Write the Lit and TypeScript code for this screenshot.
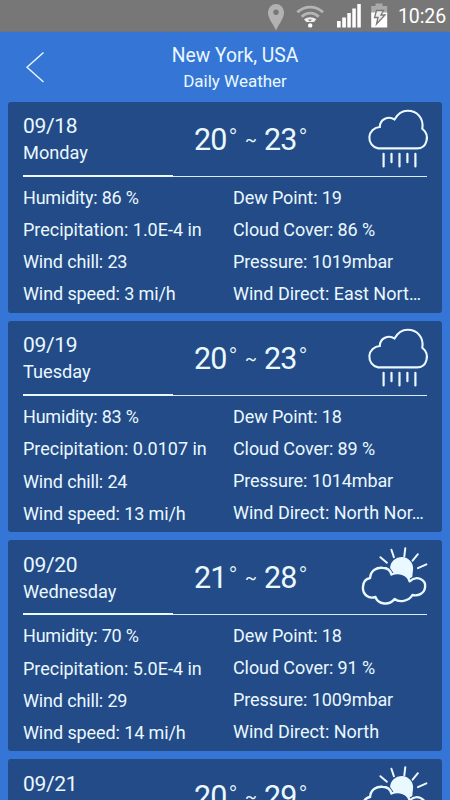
import { LitElement, html, svg, css } from "lit";
import { customElement, property } from "lit/decorators.js";

interface Day {
  date: string;
  name: string;
  low: number;
  high: number;
  icon: "rain" | "sun";
  left: string[];
  right: string[];
}

const days: Day[] = [
  {
    date: "09/18", name: "Monday", low: 20, high: 23, icon: "rain",
    left: ["Humidity: 86 %", "Precipitation: 1.0E-4 in", "Wind chill: 23", "Wind speed: 3 mi/h"],
    right: ["Dew Point: 19", "Cloud Cover: 86 %", "Pressure: 1019mbar", "Wind Direct: East Nort…"],
  },
  {
    date: "09/19", name: "Tuesday", low: 20, high: 23, icon: "rain",
    left: ["Humidity: 83 %", "Precipitation: 0.0107 in", "Wind chill: 24", "Wind speed: 13 mi/h"],
    right: ["Dew Point: 18", "Cloud Cover: 89 %", "Pressure: 1014mbar", "Wind Direct: North Nor…"],
  },
  {
    date: "09/20", name: "Wednesday", low: 21, high: 28, icon: "sun",
    left: ["Humidity: 70 %", "Precipitation: 5.0E-4 in", "Wind chill: 29", "Wind speed: 14 mi/h"],
    right: ["Dew Point: 18", "Cloud Cover: 91 %", "Pressure: 1009mbar", "Wind Direct: North"],
  },
  { date: "09/21", name: "", low: 20, high: 29, icon: "sun", left: [], right: [] },
];

// Letter spacing in px, by the first word of a reading.
const tracking: Record<string, number> = {
  Humidity: -0.2, Precipitation: -0.02, "Wind chill": -0.15, "Wind speed": -0.1,
  "Dew Point": -0.1, "Cloud Cover": -0.1, Pressure: -0.1, "Wind Direct": 0,
};

const reading = (t: string) =>
  html`<div style="letter-spacing:${tracking[t.split(":")[0]] ?? 0}px">${t}</div>`;

const rain = svg`
  <path d="M16.500 45.200 A10.800 10.800 0 0 1 18.200 23.800 C18.200 16 27 12.200 32.900 16.300 C36.500 10 41 7.600 46 7.600 C55.500 7.600 62.500 15 60.700 25.500 C68.800 32 65.500 45.200 55.500 45.200 Z" stroke-width="2.100"/>
  <path d="M22 50.600V63.200M29.900 50.600V59M37.900 50.600V63.200M45.800 50.600V59M53.800 50.600V63.200" stroke-width="2.200" stroke-linecap="round"/>`;

const sun = svg`
  <path d="M40.500 33 A11.500 11.500 0 0 1 63.500 34 L62.700 42 L59 44 C56 38.500 50 36.800 45 39.500 Z" fill="currentColor" stroke="none"/>
  <path d="M20.500 43 C21 35 27.500 32.300 33 32.800 C37.500 32.900 40.800 35.500 41.800 39.500 C48.500 36.500 58 38.500 60 46.300 C67.500 39.500 76.500 45 75.500 52 C74.800 59 68 61.200 62.800 60 C59 66.500 49.500 67.800 45 64 C39.500 71 28.500 69.500 25.800 62 C19 64.300 13.200 59.500 13.300 52.500 C13.400 47.500 16 43.800 20.500 43 Z" fill="#234b87" stroke-width="2.400" stroke-linejoin="round"/>
  <path d="M30.800 22.200L37.300 27.700M41.800 14.800L44.300 22.300M55.700 13.200L54.700 21.300M68.300 19.200L63 25.700M76.800 29.300L68.300 33.100" stroke-width="2" stroke-linecap="round"/>`;

@customElement("status-bar")
class StatusBar extends LitElement {
  static styles = css`
    :host { display: flex; height: 32px; background: #777; color: #fff; justify-content: flex-end; box-shadow: inset 0 -1px #6c747f; }
    svg { width: 137px; height: 32px; flex: none; }
    .clock { width: 53px; font-size: 19.500px; line-height: 33px; padding-left: 1px; box-sizing: border-box; white-space: nowrap; letter-spacing: -0.100px; }
  `;
  render() {
    return html`
      <svg viewBox="260 0 137 32">
        <path d="M276 30.500C274 25 268 19 268 12.500A8 8.500 0 0 1 284 12.500C284 19 278 25 276 30.500Z" fill="#b2b2b2"/>
        <circle cx="276" cy="12.300" r="2.700" fill="#777"/>
        <g fill="none" stroke="#b5b5b5" stroke-width="2.800">
          <path d="M297.300 12.300C304.500 5.300 316 5.300 323 12.300"/>
          <path d="M301.700 16.700C306.500 12 314 12 318.700 16.700"/>
        </g>
        <path d="M304 19.300C307.500 16.500 313 16.500 316.300 19.300L314 22H306.300Z" fill="#eee"/>
        <path d="M308 19.500l2 2 2-2z" fill="#777"/>
        <circle cx="310.200" cy="25.400" r="2.200" fill="#fff"/>
        <path d="M337 21h3.700v6.500H337zM342.200 17.500h3.700v10h-3.700zM347.300 13h3.500v14.500h-3.500zM352.300 8.500h3.500v19h-3.500zM357.300 4h3.500v23.500h-3.500z" fill="#fff"/>
        <path d="M375.500 3.500h7v2.500h4.700v8h-16V6h4.300z" fill="#a9a9a9"/>
        <path d="M371.200 12.500h16v15h-16z" fill="#fff"/>
        <path d="M376.500 10.500h7l-2.500 4.500h4l-8.500 9 1.500-6.500h-3.500z" fill="#eee" stroke="#777" stroke-width="1.300"/>
      </svg>
      <span class="clock">10:26</span>`;
  }
}

@customElement("day-card")
class DayCard extends LitElement {
  @property({ attribute: false }) day!: Day;
  static styles = css`
    :host { display: block; flex: none; height: 211.300px; box-sizing: border-box; background: #234b87; border-radius: 3px; padding: 0 15px; overflow: hidden; color: #eaf8ff; }
    .head { display: grid; grid-template-columns: 171px 1fr 80px; height: 73px; }
    .date { font-size: 21px; line-height: 26px; margin-top: 11.500px; letter-spacing: -0.300px; }
    .name { font-size: 18.200px; line-height: 27px; }
    .temp { display: flex; align-items: flex-start; font-size: 30.500px; line-height: 36px; margin-top: 20px; letter-spacing: -0.800px; }
    .temp span { flex: none; }
    .num { width: 33.500px; }
    .deg { font-size: 24px; font-weight: 300; line-height: 32px; width: 17.500px; box-sizing: border-box; padding-left: 1px; }
    .til { font-size: 17.500px; line-height: 36px; width: 19px; }
    .icon { width: 80px; height: 73px; overflow: visible; }
    .rule { height: 1px; background: #d8ecfa; position: relative; margin-top: 1px; }
    .mark { position: absolute; left: 0; bottom: 0; width: 149.500px; height: 2px; background: #eaf8ff; }
    .info { display: grid; grid-template-columns: 210px 1fr; padding-top: 5.300px; font-size: 18px; white-space: nowrap; }
    .left { line-height: 32.200px; }
    .right { line-height: 32px; }
  `;
  render() {
    const d = this.day;
    return html`
      <div class="head">
        <div><div class="date">${d.date}</div><div class="name">${d.name}</div></div>
        <div class="temp"><span class="num">${d.low}</span><span class="deg">°</span><span class="til">~</span><span class="num">${d.high}</span><span class="deg">°</span></div>
        <svg class="icon" viewBox=${d.icon === "rain" ? "-14.6 -1.2 80 73" : "-2.6 5 80 73"} fill="none" stroke="currentColor">${d.icon === "rain" ? rain : sun}</svg>
      </div>
      <div class="rule"><div class="mark"></div></div>
      <div class="info">
        <div class="left">${d.left.map(reading)}</div>
        <div class="right">${d.right.map(reading)}</div>
      </div>`;
  }
}

@customElement("app-root")
class AppRoot extends LitElement {
  static styles = css`
    :host { display: flex; flex-direction: column; height: 800px; overflow: hidden; background: #3575d5; color: #eaf8ff; font-family: Roboto, "Liberation Sans", sans-serif; }
    status-bar { flex: none; }
    header { flex: none; height: 69.500px; display: grid; grid-template-columns: 70px 1fr 50px; }
    .back { width: 70px; height: 69px; }
    .title { text-align: center; }
    .city { font-size: 19.300px; line-height: 26px; margin-top: 11px; }
    .sub { font-size: 17px; line-height: 24px; }
    .list { display: flex; flex-direction: column; gap: 8px; padding: 0 8px; }
  `;
  render() {
    return html`
      <status-bar></status-bar>
      <header>
        <svg class="back" viewBox="0 32 70 69" fill="none" stroke="#eaf8ff" stroke-width="1.400"><path d="M43.500 52.500L27 67.300L43.500 82"/></svg>
        <div class="title"><div class="city">New York, USA</div><div class="sub">Daily Weather</div></div>
      </header>
      <div class="list">${days.map((d) => html`<day-card .day=${d}></day-card>`)}</div>`;
  }
}
